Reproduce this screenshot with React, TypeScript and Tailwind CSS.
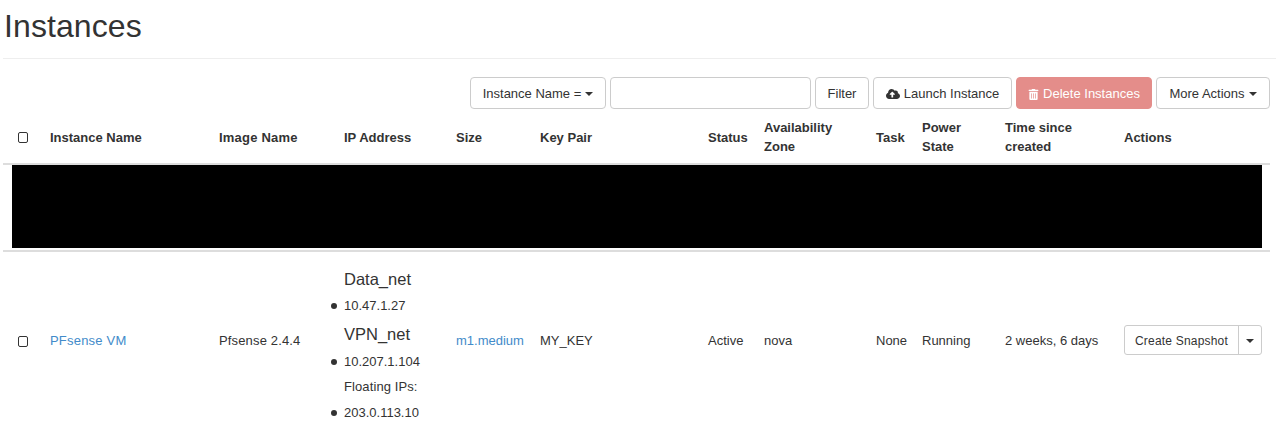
import { FaCloudUploadAlt, FaTrashAlt } from "react-icons/fa";

const headers = [
  { label: "Instance Name", width: "w-[169px]", pad: "pt-[3px]" },
  { label: "Image Name", width: "w-[125px]", pad: "pt-[3px] tracking-[0.2px]" },
  { label: "IP Address", width: "w-[112px]", pad: "pt-[3px]" },
  { label: "Size", width: "w-[84px]", pad: "pt-[3px]" },
  { label: "Key Pair", width: "w-[168px]", pad: "pt-[3px]" },
  { label: "Status", width: "w-[56px]", pad: "pt-[3px]" },
  { label: "Availability Zone", width: "w-[112px]", pad: "pt-[1px]" },
  { label: "Task", width: "w-[46px]", pad: "pt-[3px]" },
  { label: "Power State", width: "w-[83px]", pad: "pt-[1px]" },
  { label: "Time since created", width: "w-[119px]", pad: "pt-[1px]" },
  { label: "Actions", width: "w-[154px]", pad: "pt-[3px]" },
];

function Caret() {
  return (
    <span className="inline-block w-0 h-0 border-x-[4px] border-x-transparent border-t-[4px] border-t-[#333]" />
  );
}

function Checkbox() {
  return (
    <span className="block w-[10px] h-[11px] ml-[15px] border border-[#333] rounded-[2px] bg-white" />
  );
}

function ToolButton({ children, className }: { children: React.ReactNode; className: string }) {
  return (
    <button
      type="button"
      className={`h-8 pt-[2px] flex items-center justify-center gap-1 border rounded-[4px] text-[13px] ${className}`}
    >
      {children}
    </button>
  );
}

function Address({ ip }: { ip: string }) {
  return (
    <div className="relative h-[18px] flex items-center">
      <span className="absolute left-[-13px] top-[6px] w-[6px] h-[6px] rounded-full bg-[#333]" />
      {ip}
    </div>
  );
}

export default function App() {
  return (
    <div className="w-[1279px] h-[423px] overflow-hidden bg-white px-[3px] font-['Liberation_Sans',Arial,sans-serif] text-[13px] leading-[18px] text-[#333]">
      <div className="h-[59px] border-b border-[#eee]">
        <h1 className="pl-px pt-[7px] text-[32px] leading-[38px] font-normal tracking-[0.1px]">Instances</h1>
      </div>

      <div className="mt-[18px] pr-[6px] flex justify-end gap-1">
        <ToolButton className="w-[136px] border-[#ccc] bg-white">
          Instance Name = <Caret />
        </ToolButton>
        <input className="w-[201px] h-8 border border-[#ccc] rounded-[4px] bg-white" />
        <ToolButton className="w-[54px] border-[#ccc] bg-white">Filter</ToolButton>
        <ToolButton className="w-[139px] border-[#ccc] bg-white">
          <FaCloudUploadAlt className="text-[14px]" /> Launch Instance
        </ToolButton>
        <ToolButton className="w-[136px] border-[#e48d8a] bg-[#e48d8a] text-white">
          <FaTrashAlt className="text-[11px]" /> Delete Instances
        </ToolButton>
        <ToolButton className="w-[114px] border-[#ccc] bg-white">
          More Actions <Caret />
        </ToolButton>
      </div>

      <table className="w-[1267px] table-fixed border-collapse">
        <thead>
          <tr className="h-[55px] border-b-[2px] border-[#ddd]">
            <th className="w-[39px] p-0 pt-[3px] align-middle">
              <Checkbox />
            </th>
            {headers.map((h) => (
              <th key={h.label} className={`${h.width} ${h.pad} px-2 text-left align-middle font-bold leading-[19px]`}>
                {h.label}
              </th>
            ))}
          </tr>
        </thead>
        <tbody>
          <tr className="h-[85px] border-b-[2px] border-[#ddd]">
            <td colSpan={12} className="p-0 pl-[9px] pr-[8px] pb-[2px]">
              <div className="h-[83px] bg-black" />
            </td>
          </tr>
          <tr>
            <td className="p-0 align-middle">
              <Checkbox />
            </td>
            <td className="px-2 align-middle">
              <a className="text-[#428bca] tracking-[0.2px]">PFsense VM</a>
            </td>
            <td className="px-2 align-middle tracking-[0.15px]">Pfsense 2.4.4</td>
            <td className="px-2 pt-[17px] pb-[8px] align-top">
              <div className="text-[16.5px] leading-[20px]">Data_net</div>
              <div className="mt-[8px]"><Address ip="10.47.1.27" /></div>
              <div className="mt-[9px] text-[16.5px] leading-[20px]">VPN_net</div>
              <div className="mt-[9px]"><Address ip="10.207.1.104" /></div>
              <div className="mt-[7px] h-[18px] tracking-[0.1px]">Floating IPs:</div>
              <div className="mt-[8px]"><Address ip="203.0.113.10" /></div>
            </td>
            <td className="px-2 align-middle">
              <a className="text-[#428bca]">m1.medium</a>
            </td>
            <td className="px-2 align-middle">MY_KEY</td>
            <td className="px-2 align-middle">Active</td>
            <td className="px-2 align-middle">nova</td>
            <td className="px-2 align-middle">None</td>
            <td className="px-2 align-middle">Running</td>
            <td className="px-2 align-middle">2 weeks, 6 days</td>
            <td className="px-2 pb-[2px] align-middle">
              <div className="flex h-[30px] w-[138px] border border-[#ccc] rounded-[3px]">
                <span className="w-[114px] pt-[2px] flex items-center justify-center border-r border-[#ccc] text-[12px] tracking-[0.2px]">
                  Create Snapshot
                </span>
                <span className="flex-1 pt-[2px] flex items-center justify-center">
                  <Caret />
                </span>
              </div>
            </td>
          </tr>
        </tbody>
      </table>
    </div>
  );
}
